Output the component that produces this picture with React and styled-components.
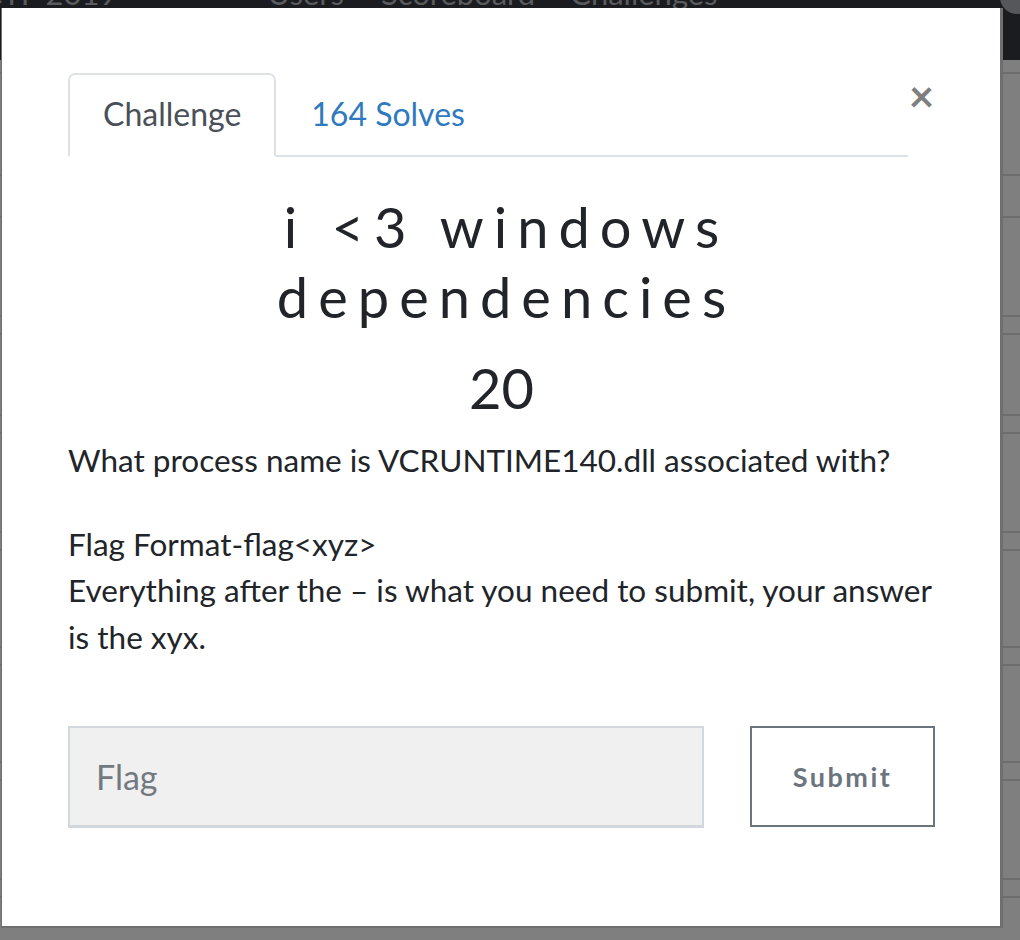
import React from 'react';
import styled, { createGlobalStyle } from 'styled-components';

const GlobalStyle = createGlobalStyle`
  html, body {
    margin: 0;
    padding: 0;
  }
  body {
    background: #7f7f7f;
    font-family: 'Lato', 'Liberation Sans', sans-serif;
    overflow: hidden;
  }
`;

const Page = styled.div`
  width: 1020px;
  height: 940px;
  overflow: hidden;
`;

const Navbar = styled.div`
  height: 60px;
  background: #1b1c20;
  display: flex;
  align-items: flex-start;
  overflow: hidden;
`;

const NavText = styled.span`
  color: #5a5b5e;
  font-size: 31px;
  line-height: 1;
  margin-top: -22px;
  margin-left: ${(p) => p.$left}px;
  white-space: nowrap;
`;

const UserDot = styled.span`
  margin-left: auto;
  margin-right: -14px;
  margin-top: -20px;
  width: 34px;
  height: 34px;
  border-radius: 50%;
  background: #56575a;
`;

const Rows = styled.div`
  display: flex;
  flex-direction: column;
`;

const Row = styled.div`
  box-sizing: border-box;
  height: ${(p) => p.$h}px;
  border-bottom: 2px solid rgba(0, 0, 0, 0.14);
`;

const Modal = styled.div`
  position: fixed;
  top: 8px;
  left: 1px;
  width: 1002px;
  height: 920px;
  box-sizing: border-box;
  background: #fff;
  border: 1px solid #6f6f6f;
  border-top: none;
  border-right-width: 3px;
  border-bottom-width: 2px;
  padding: 65px 65px 0 66px;
  display: flex;
  flex-direction: column;
`;

const Header = styled.div`
  display: flex;
  align-items: flex-start;
`;

const Tabs = styled.div`
  flex: 1;
  display: flex;
  border-bottom: 2px solid #dee2e6;
`;

const Tab = styled.div`
  padding: 18px 33px 20px;
  margin-bottom: -2px;
  font-size: 32px;
  line-height: 42px;
  border: 2px solid ${(p) => (p.$active ? '#dee2e6' : 'transparent')};
  border-bottom-color: ${(p) => (p.$active ? '#fff' : 'transparent')};
  border-radius: 7px 7px 0 0;
  color: ${(p) => (p.$active ? '#495057' : '#2f7abf')};
  background: ${(p) => (p.$active ? '#fff' : 'transparent')};
`;

const Close = styled.span`
  width: 27px;
  font-size: 44px;
  font-weight: 700;
  line-height: 44px;
  color: #7f7f7f;
  text-align: center;
`;

const Title = styled.h1`
  margin: 35px 0 0;
  padding-left: 10px;
  font-size: 56px;
  font-weight: 400;
  line-height: 70px;
  letter-spacing: 10px;
  color: #212529;
  text-align: center;
`;

const Points = styled.h3`
  margin: 24px 0 0;
  font-size: 56px;
  font-weight: 400;
  line-height: 64px;
  color: #212529;
  text-align: center;
`;

const Text = styled.p`
  margin: ${(p) => p.$top}px 0 0;
  font-size: 31.5px;
  line-height: 46.5px;
  color: #212529;
`;

const Form = styled.div`
  display: flex;
  justify-content: space-between;
  margin-top: 66px;
`;

const FlagInput = styled.input`
  width: 636px;
  height: 102px;
  box-sizing: border-box;
  padding: 0 26px;
  background: #f0f0f0;
  border: 2px solid #d3d7de;
  border-bottom-width: 3px;
  font-family: 'Lato', sans-serif;
  font-size: 34px;
  color: #495057;
  outline: none;
  &::placeholder {
    color: #727980;
  }
`;

const SubmitButton = styled.button`
  width: 185px;
  height: 101px;
  padding: 0;
  background: #fff;
  border: 2px solid #6c757d;
  font-family: 'Lato', sans-serif;
  font-size: 27px;
  font-weight: 700;
  letter-spacing: 2.5px;
  color: #6c757d;
`;

export default function App() {
  const rows = [14, 102, 42, 99, 18, 81, 18, 99, 18, 97, 18, 97, 18, 99, 18, 97];
  return (
    <Page>
      <GlobalStyle />
      <Navbar>
        <NavText $left={-69}>UB CTF 2019</NavText>
        <NavText $left={150}>Users</NavText>
        <NavText $left={37}>Scoreboard</NavText>
        <NavText $left={35}>Challenges</NavText>
        <UserDot />
      </Navbar>
      <Rows>
        {rows.map((h, i) => (
          <Row key={i} $h={h} />
        ))}
      </Rows>
      <Modal>
        <Header>
          <Tabs>
            <Tab $active>Challenge</Tab>
            <Tab>164 Solves</Tab>
          </Tabs>
          <Close>×</Close>
        </Header>
        <Title>
          i &lt;3 windows
          <br />
          dependencies
        </Title>
        <Points>20</Points>
        <Text $top={17}>What process name is VCRUNTIME140.dll associated with?</Text>
        <Text $top={37}>
          Flag Format-flag&lt;xyz&gt;
          <br />
          Everything after the – is what you need to submit, your answer is the xyx.
        </Text>
        <Form>
          <FlagInput placeholder="Flag" />
          <SubmitButton>Submit</SubmitButton>
        </Form>
      </Modal>
    </Page>
  );
}
